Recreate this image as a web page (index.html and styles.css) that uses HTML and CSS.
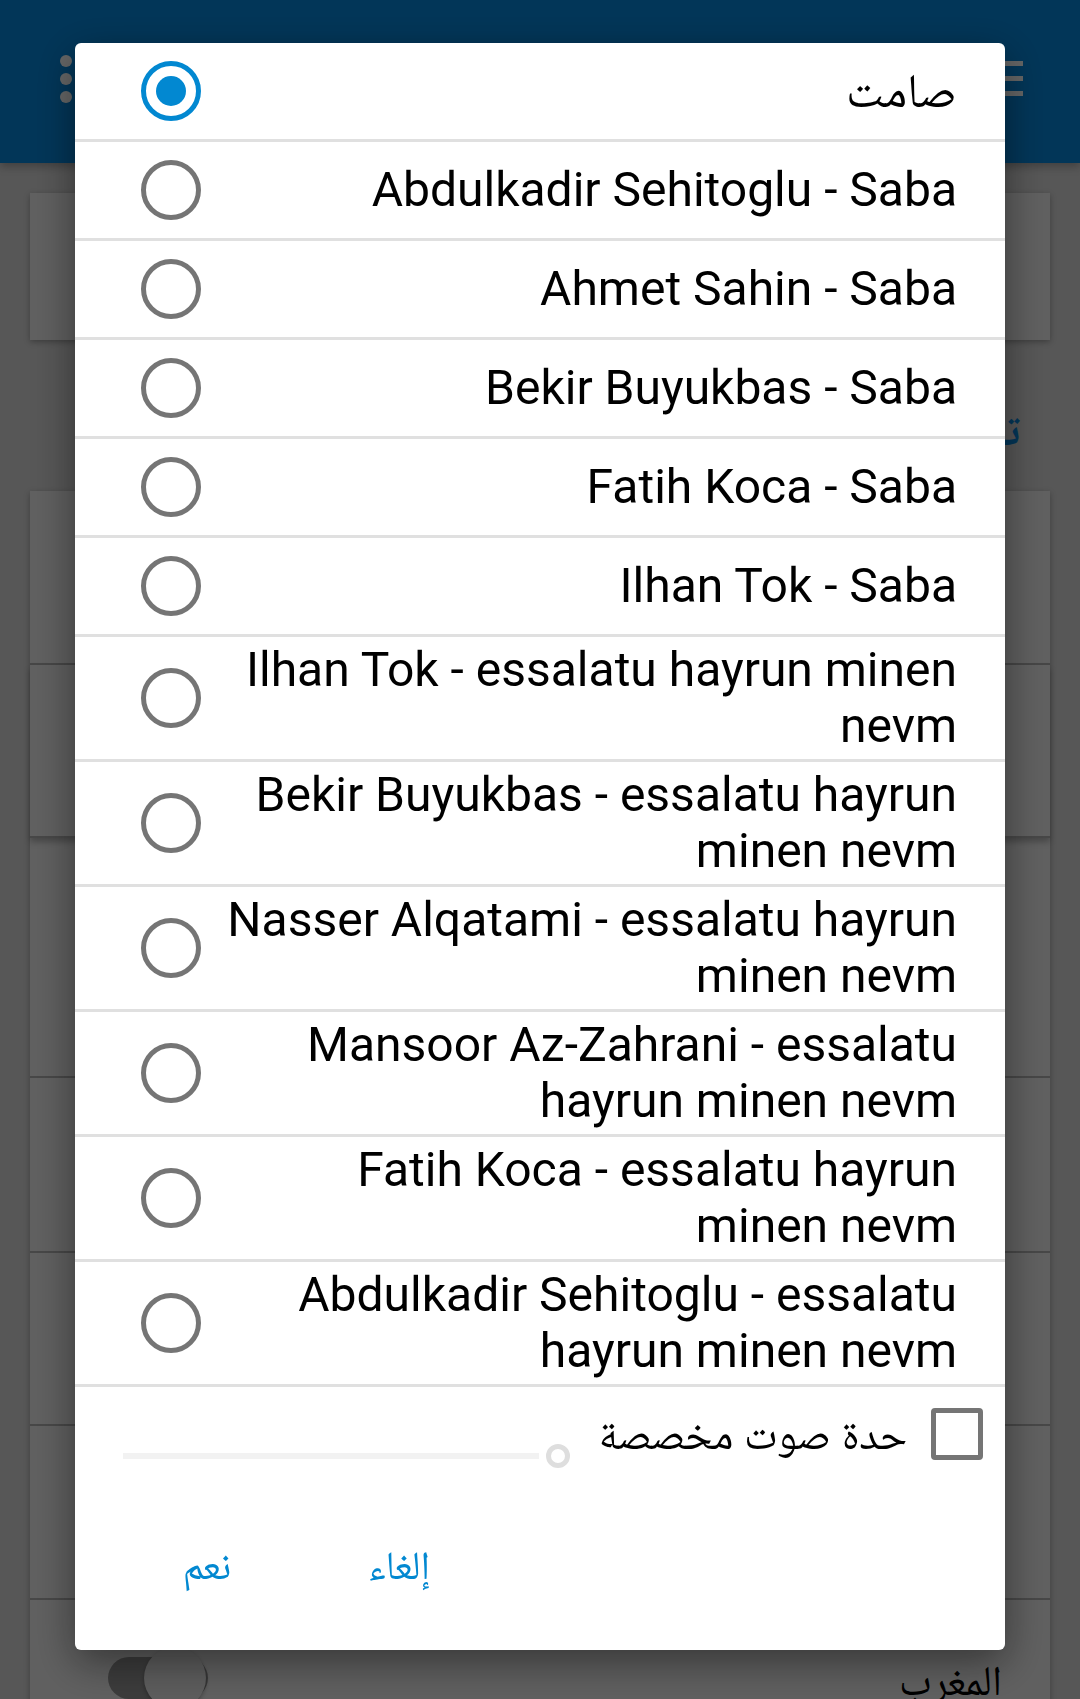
FILE: index.html
```html
<!DOCTYPE html>
<html lang="ar">
<head>
<meta charset="utf-8">
<title>Sound picker</title>
<link rel="stylesheet" href="styles.css">
</head>
<body>
<div class="screen">
  <header class="appbar">
    <div class="overflow"><span></span><span></span><span></span></div>
    <div class="menu"><span></span><span></span><span></span></div>
  </header>
  <main class="content">
    <section class="card card-top"></section>
    <h2 class="section-title">تنبيهات</h2>
    <section class="card-list">
      <div class="item h172"></div>
      <div class="item h171 raised"></div>
      <div class="item h238"></div>
      <div class="item h173"></div>
      <div class="item h171"></div>
      <div class="item h172"></div>
      <div class="item last">
        <div class="toggle"><span class="knob"></span></div>
        <span class="prayer">المغرب</span>
      </div>
    </section>
  </main>
</div>

<div class="scrim"></div>

<div class="dialog" role="dialog">
  <ul class="choices">
    <li class="choice"><span class="radio checked"></span><span class="label">صامت</span></li>
    <li class="choice"><span class="radio"></span><span class="label">Abdulkadir Sehitoglu - Saba</span></li>
    <li class="choice"><span class="radio"></span><span class="label">Ahmet Sahin - Saba</span></li>
    <li class="choice"><span class="radio"></span><span class="label">Bekir Buyukbas - Saba</span></li>
    <li class="choice"><span class="radio"></span><span class="label">Fatih Koca - Saba</span></li>
    <li class="choice"><span class="radio"></span><span class="label">Ilhan Tok - Saba</span></li>
    <li class="choice"><span class="radio"></span><span class="label">Ilhan Tok - essalatu hayrun minen nevm</span></li>
    <li class="choice"><span class="radio"></span><span class="label">Bekir Buyukbas - essalatu hayrun minen nevm</span></li>
    <li class="choice"><span class="radio"></span><span class="label">Nasser Alqatami - essalatu hayrun minen nevm</span></li>
    <li class="choice"><span class="radio"></span><span class="label">Mansoor Az-Zahrani - essalatu hayrun minen nevm</span></li>
    <li class="choice"><span class="radio"></span><span class="label">Fatih Koca - essalatu hayrun minen nevm</span></li>
    <li class="choice"><span class="radio"></span><span class="label">Abdulkadir Sehitoglu - essalatu hayrun minen nevm</span></li>
  </ul>
  <div class="pitch">
    <div class="slider"><span class="track"></span><span class="thumb"></span></div>
    <span class="pitch-label">حدة صوت مخصصة</span>
    <span class="checkbox"></span>
  </div>
  <div class="buttons">
    <button class="btn">نعم</button>
    <button class="btn">إلغاء</button>
  </div>
</div>
</body>
</html>
```

FILE: styles.css
```css
* { box-sizing: border-box; }

html, body {
  margin: 0;
  padding: 0;
}

body {
  width: 1080px;
  height: 1699px;
  overflow: hidden;
  font-family: Roboto, "Noto Naskh Arabic", "Noto Sans Arabic", "Noto Sans", "DejaVu Sans", sans-serif;
  background: #d9d9d9;
}

.screen {
  width: 1080px;
  height: 1699px;
  display: flex;
  flex-direction: column;
  overflow: hidden;
}
.screen > *, .content > *, .card-list > * { flex: none; }

/* ---------- app bar (behind scrim) ---------- */
.appbar {
  height: 163px;
  background: #0787dc;
  display: flex;
  justify-content: space-between;
  align-items: flex-start;
  padding: 55px 57px 0 60px;
  box-shadow: 0 4px 8px rgba(0,0,0,0.25);
  position: relative;
  z-index: 0;
}

.overflow {
  display: flex;
  flex-direction: column;
  gap: 6px;
}
.overflow span {
  width: 12px;
  height: 12px;
  border-radius: 50%;
  background: #ffffff;
}

.menu {
  display: flex;
  flex-direction: column;
  gap: 10px;
  padding-top: 6px;
}
.menu span {
  width: 54px;
  height: 5px;
  background: #ffffff;
}

/* ---------- content (behind scrim) ---------- */
.content {
  padding: 30px 30px 0 30px;
  display: flex;
  flex-direction: column;
}

.card {
  background: #efefef;
  box-shadow: 0 2px 6px rgba(0,0,0,0.3);
}
.card-top {
  height: 147px;
}

.section-title {
  margin: 0;
  height: 151px;
  padding: 60px 30px 0 0;
  text-align: right;
  font-size: 44px;
  font-weight: bold;
  color: #0787dc;
  line-height: 60px;
}

.card-list {
  display: flex;
  flex-direction: column;
  box-shadow: 0 2px 6px rgba(0,0,0,0.3);
}
.item {
  background: #efefef;
  border-bottom: 2px solid #b2b2b2;
}
.item.raised { box-shadow: 0 4px 6px rgba(0,0,0,0.25); position: relative; }
.h172 { height: 174px; }
.h171 { height: 173px; }
.h238 { height: 240px; }
.h173 { height: 175px; }
.item.last {
  height: 140px;
  border-bottom: none;
  display: flex;
  justify-content: space-between;
  align-items: flex-start;
  padding: 45px 48px 0 78px;
}

.toggle {
  width: 100px;
  height: 42px;
  margin-top: 12px;
  border-radius: 21px;
  background: #969696;
  position: relative;
}
.knob {
  position: absolute;
  left: 36px;
  top: -10px;
  width: 62px;
  height: 62px;
  border-radius: 50%;
  background: #e8e8e8;
  box-shadow: 0 2px 4px rgba(0,0,0,0.3);
}

.prayer {
  font-size: 42px;
  line-height: 60px;
  color: #000;
  padding-top: 6px;
}

/* ---------- scrim ---------- */
.scrim {
  position: fixed;
  inset: 0;
  background: rgba(0,0,0,0.6);
  z-index: 1;
}

/* ---------- dialog ---------- */
.dialog {
  position: fixed;
  left: 75px;
  top: 43px;
  width: 930px;
  height: 1607px;
  background: #ffffff;
  border-radius: 6px;
  box-shadow: 0 12px 40px rgba(0,0,0,0.45);
  z-index: 2;
  overflow: hidden;
  display: flex;
  flex-direction: column;
}
.dialog > * { flex: none; }

.choices {
  list-style: none;
  margin: 0;
  padding: 0;
}

.choice {
  display: flex;
  align-items: center;
  min-height: 99px;
  padding: 5px 48px 5px 66px;
  border-bottom: 3px solid #e0e0e0;
}

.radio {
  flex: none;
  width: 60px;
  height: 60px;
  border-radius: 50%;
  border: 5px solid #757575;
  display: flex;
  align-items: center;
  justify-content: center;
}
.radio.checked {
  border-color: #0288d1;
}
.radio.checked::after {
  content: "";
  width: 30px;
  height: 30px;
  border-radius: 50%;
  background: #0288d1;
}

.label {
  flex: 1;
  margin-left: 24px;
  text-align: right;
  font-size: 48px;
  line-height: 56px;
  color: #000;
}

.pitch {
  display: flex;
  align-items: flex-start;
  padding: 21px 22px 0 48px;
  height: 74px;
}

.slider {
  flex: none;
  display: flex;
  align-items: center;
  gap: 7px;
  margin-top: 36px;
  height: 24px;
}
.track {
  width: 416px;
  height: 6px;
  background: #f2f2f2;
}
.thumb {
  width: 24px;
  height: 24px;
  border-radius: 50%;
  border: 5px solid #dedede;
}

.pitch-label {
  margin-left: auto;
  margin-right: 24px;
  white-space: nowrap;
  font-size: 43px;
  line-height: 53px;
  color: #000;
}

.checkbox {
  flex: none;
  width: 52px;
  height: 52px;
  border: 5px solid #757575;
  border-radius: 4px;
}

.buttons {
  display: flex;
  padding: 55px 0 0 36px;
}
.btn {
  width: 192px;
  height: 108px;
  border: none;
  background: transparent;
  font-family: Roboto, "Noto Naskh Arabic", "Noto Sans Arabic", "Noto Sans", "DejaVu Sans", sans-serif;
  font-size: 40px;
  color: #0288d1;
  padding: 0;
}
```
